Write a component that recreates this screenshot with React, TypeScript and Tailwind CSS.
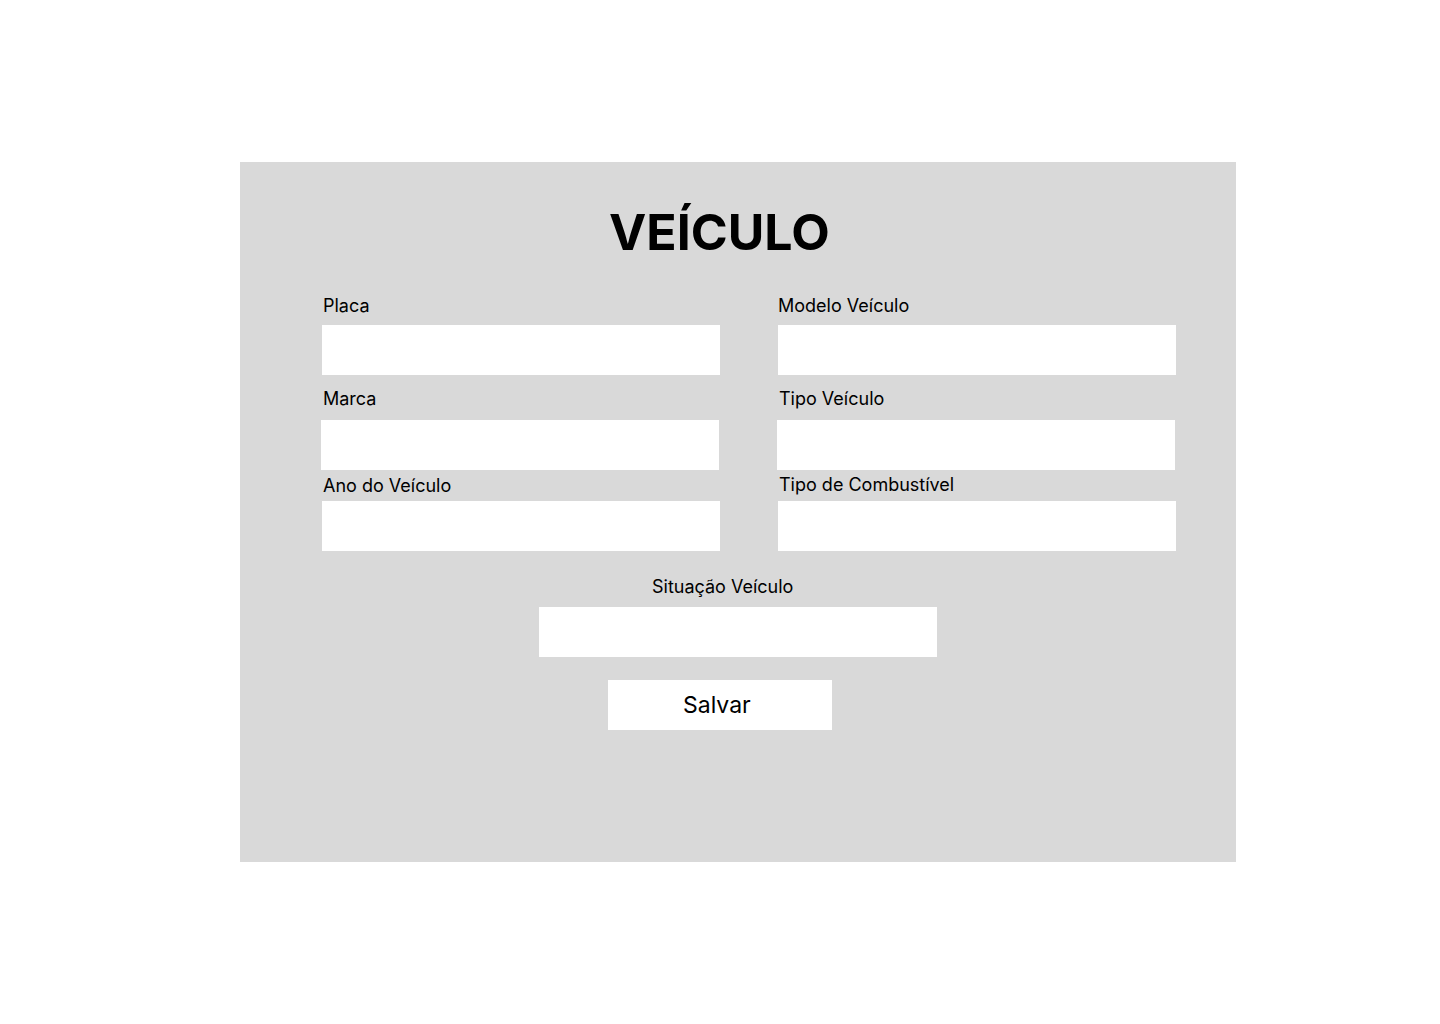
import React from "react";

const font = { fontFamily: "Inter, 'Noto Sans', sans-serif" };

function Label({ children, className = "" }: { children: React.ReactNode; className?: string }) {
  return <div className={`text-[18px] leading-[22px] text-black ${className}`}>{children}</div>;
}

function Input({ className = "" }: { className?: string }) {
  return <div className={`h-[50px] w-[398px] bg-white ${className}`} />;
}

export default function App() {
  return (
    <div className="min-h-[1024px] w-[1440px] bg-white" style={font}>
      <div className="h-[162px]" />
      <div className="ml-[240px] flex h-[700px] w-[996px] flex-col bg-[#d9d9d9]">
        <h1 className="pl-[369px] pt-[40px] text-[50px] font-bold leading-[60px] text-black">VEÍCULO</h1>

        <div className="mt-[33px] flex">
          <div className="ml-[82px] flex w-[398px] flex-col">
            <Label className="pl-[1px]">Placa</Label>
            <Input className="mt-[8px]" />
            <Label className="mt-[13px] pl-[1px]">Marca</Label>
            <Input className="-ml-[1px] mt-[10px]" />
            <Label className="mt-[5px] pl-[1px]">Ano do Veículo</Label>
            <Input className="mt-[4px]" />
          </div>
          <div className="ml-[58px] flex w-[398px] flex-col">
            <Label>Modelo Veículo</Label>
            <Input className="mt-[8px]" />
            <Label className="mt-[13px] pl-[1px]">Tipo Veículo</Label>
            <Input className="-ml-[1px] mt-[10px]" />
            <Label className="mt-[4px] pl-[1px]">Tipo de Combustível</Label>
            <Input className="mt-[5px]" />
          </div>
        </div>

        <Label className="ml-[412px] mt-[25px]">Situação Veículo</Label>
        <Input className="ml-[299px] mt-[9px]" />

        <button
          type="button"
          className="ml-[368px] mt-[23px] flex h-[50px] w-[224px] items-center bg-white pl-[75px] text-[23px] leading-[28px] text-black"
        >
          Salvar
        </button>
      </div>
    </div>
  );
}
